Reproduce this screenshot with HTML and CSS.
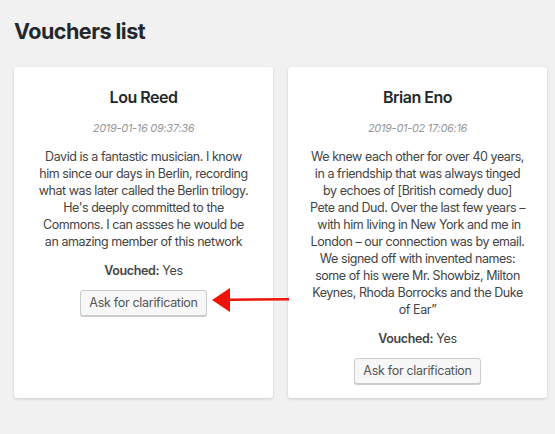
FILE: index.html
```html
<!DOCTYPE html>
<html>
<head>
<meta charset="utf-8">
<link rel="stylesheet" href="styles.css">
</head>
<body>
<div class="page">
  <h1 class="title">Vouchers list</h1>
  <div class="cards">
    <div class="card">
      <h2 class="name">Lou Reed</h2>
      <div class="date">2019-01-16 09:37:36</div>
      <p class="text">David is a fantastic musician. I know him since our days in Berlin, recording what was later called the Berlin trilogy. He's deeply committed to the Commons. I can assses he would be an amazing member of this network</p>
      <p class="vouched"><strong>Vouched:</strong> Yes</p>
      <button class="btn">Ask for clarification</button>
    </div>
    <div class="card">
      <h2 class="name">Brian Eno</h2>
      <div class="date">2019-01-02 17:06:16</div>
      <p class="text">We knew each other for over 40 years, in a friendship that was always tinged by echoes of [British comedy duo] Pete and Dud. Over the last few years –&nbsp;with him living in New York and me in London – our connection was by email. We signed off with invented names: some of his were Mr. Showbiz, Milton Keynes, Rhoda Borrocks and the Duke of Ear”</p>
      <p class="vouched"><strong>Vouched:</strong> Yes</p>
      <button class="btn">Ask for clarification</button>
    </div>
    <svg class="arrow" width="80" height="24" viewBox="0 0 80 24">
      <path d="M18 10.5 L77 10 L77 12.5 L18 13 Z" fill="#f0130b"/>
      <path d="M0 12 L18 0 L18 24 Z" fill="#f0130b"/>
    </svg>
  </div>
</div>
</body>
</html>
```

FILE: styles.css
```css
html, body {
  margin: 0;
  padding: 0;
  background: #f1f1f1;
}
body {
  font-family: Inter, "Noto Sans", sans-serif;
  color: #444;
}
.page {
  padding: 16px 14px;
}
.title {
  margin: 0;
  font-size: 21.5px;
  line-height: 30px;
  font-weight: 700;
  color: #23282d;
  letter-spacing: -0.5px;
}
.cards {
  position: relative;
  display: grid;
  grid-template-columns: 259px 259px;
  column-gap: 15px;
  margin-top: 21px;
}
.card {
  background: #fff;
  border-radius: 3px;
  box-shadow: 0 1px 3px rgba(0,0,0,0.16);
  padding: 20px 22px 14px;
  display: flex;
  flex-direction: column;
  align-items: center;
  text-align: center;
}
.name {
  margin: 0;
  font-size: 16px;
  line-height: 20px;
  font-weight: 600;
  color: #23282d;
  letter-spacing: -0.5px;
}
.date {
  margin-top: 14px;
  font-size: 11px;
  line-height: 14px;
  font-style: italic;
  color: #999;
  letter-spacing: -0.3px;
}
.text {
  margin: 13px 0 0;
  font-size: 12.5px;
  line-height: 17px;
  color: #444;
  letter-spacing: -0.45px;
}
.vouched {
  margin: 12px 0 0;
  font-size: 12.5px;
  line-height: 17px;
  letter-spacing: -0.35px;
}
.vouched strong {
  font-weight: 600;
}
.btn {
  margin-top: 11px;
  font-family: inherit;
  font-size: 12.5px;
  line-height: 24px;
  padding: 0 8px;
  color: #555;
  background: #f7f7f7;
  border: 1px solid #ccc;
  border-radius: 3px;
  box-shadow: 0 1px 0 #ccc;
  letter-spacing: -0.3px;
}
.arrow {
  position: absolute;
  left: 198px;
  top: 221px;
}
```
